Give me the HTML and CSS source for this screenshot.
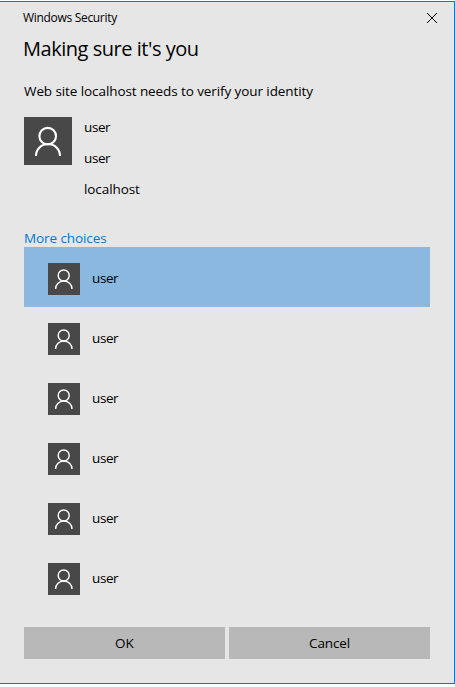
FILE: index.html
```html
<!DOCTYPE html>
<html lang="en">
<head>
<meta charset="utf-8">
<title>Windows Security</title>
<link rel="stylesheet" href="styles.css">
</head>
<body>
<svg class="defs" aria-hidden="true">
  <symbol id="person-large" viewBox="0 0 48 48"><circle cx="23.7" cy="19.2" r="8.3"/><path d="M12 39v-.3a12 11.7 0 0 1 24 0v.3"/></symbol>
  <symbol id="person-small" viewBox="0 0 32 32"><circle cx="15.7" cy="12.5" r="5.5"/><path d="M7.6 26a8.2 8 0 0 1 16.4 0"/></symbol>
</svg>
<main class="dialog">
  <header class="titlebar">
    <span class="caption">Windows Security</span>
    <svg class="close" viewBox="0 0 10 10"><path d="M0 0L10 10M10 0L0 10"/></svg>
  </header>
  <h1 class="title">Making sure it's you</h1>
  <p class="message">Web site localhost needs to verify your identity</p>
  <section class="account">
    <svg class="avatar avatar-large"><use href="#person-large"/></svg>
    <div class="details"><span class="name">user</span><span class="name">user</span><span class="host">localhost</span></div>
  </section>
  <a class="more">More choices</a>
  <ul class="choices">
    <li class="choice selected"><svg class="avatar"><use href="#person-small"/></svg><span class="name">user</span></li>
    <li class="choice"><svg class="avatar"><use href="#person-small"/></svg><span class="name">user</span></li>
    <li class="choice"><svg class="avatar"><use href="#person-small"/></svg><span class="name">user</span></li>
    <li class="choice"><svg class="avatar"><use href="#person-small"/></svg><span class="name">user</span></li>
    <li class="choice"><svg class="avatar"><use href="#person-small"/></svg><span class="name">user</span></li>
    <li class="choice"><svg class="avatar"><use href="#person-small"/></svg><span class="name">user</span></li>
  </ul>
  <footer class="actions">
    <button class="button"><span class="ok">OK</span></button>
    <button class="button"><span class="cancel">Cancel</span></button>
  </footer>
</main>
</body>
</html>
```
FILE: styles.css
```css
* { box-sizing: border-box; }
body { margin: 0; padding-top: 1px; background: #fff; font: 13.5px/20px "Segoe UI", "Open Sans", "Noto Sans", sans-serif; letter-spacing: -0.09px; color: #000; }
.defs { display: none; }
.dialog { width: 455px; height: 683px; padding: 0 24px; background: #e6e6e6; border: solid #0a78d0; border-width: 1px 1px 1px 0; display: flex; flex-direction: column; white-space: nowrap; }
.titlebar { display: flex; justify-content: space-between; align-items: center; height: 32px; margin: 0 -7px 0 -1px; font-size: 12px; letter-spacing: -0.31px; }
.close { width: 10px; height: 10px; overflow: visible; fill: none; stroke: #000; stroke-width: 1; }
.title { margin: 1px 0 0 -1px; font-size: 20px; line-height: 28px; font-weight: 400; letter-spacing: -0.47px; }
.message { margin: 18px 0 0; }
.account { display: flex; margin-top: 16px; gap: 12px; height: 112px; }
.avatar { width: 32px; height: 32px; background: #484848; fill: none; stroke: #fff; stroke-width: 1.4; flex: none; }
.avatar-large { width: 48px; height: 48px; stroke-width: 2.1; }
.details { display: flex; flex-direction: column; gap: 11px; }
.name { letter-spacing: -0.4px; }
.more { color: #0078d7; height: 18px; line-height: 18px; }
.choices { list-style: none; margin: 0; padding: 0; width: 406px; }
.choice { display: flex; align-items: flex-start; height: 60px; padding: 16px 24px 0; gap: 12px; }
.choice .name { line-height: 30px; }
.selected { background: #8ab8df; }
.actions { display: grid; grid-template-columns: 201px 201px; gap: 4px; margin-top: 20px; }
.button { height: 32px; border: 0; padding: 0; background: #b8b8b8; font: inherit; color: inherit; }
.cancel { letter-spacing: -0.15px; }
```
